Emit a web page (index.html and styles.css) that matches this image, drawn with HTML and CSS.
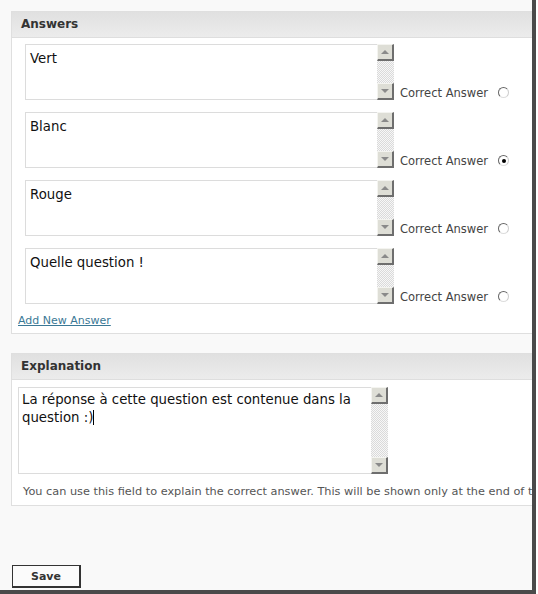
FILE: index.html
```html
<!DOCTYPE html>
<html>
<head>
<meta charset="utf-8">
<link rel="stylesheet" href="styles.css">
</head>
<body>
<div class="frame">
  <div class="panel answers">
    <div class="panel-head">Answers</div>
    <div class="panel-body">
      <div class="row">
        <div class="ta short"><div class="ta-text">Vert</div><div class="sb"><div class="sb-btn up"><span class="arr up"></span></div><div class="sb-track"></div><div class="sb-btn down"><span class="arr down"></span></div></div></div>
        <span class="lbl">Correct Answer</span><span class="radio"></span>
      </div>
      <div class="row">
        <div class="ta short"><div class="ta-text">Blanc</div><div class="sb"><div class="sb-btn up"><span class="arr up"></span></div><div class="sb-track"></div><div class="sb-btn down"><span class="arr down"></span></div></div></div>
        <span class="lbl">Correct Answer</span><span class="radio checked"></span>
      </div>
      <div class="row">
        <div class="ta short"><div class="ta-text">Rouge</div><div class="sb"><div class="sb-btn up"><span class="arr up"></span></div><div class="sb-track"></div><div class="sb-btn down"><span class="arr down"></span></div></div></div>
        <span class="lbl">Correct Answer</span><span class="radio"></span>
      </div>
      <div class="row">
        <div class="ta short"><div class="ta-text">Quelle question !</div><div class="sb"><div class="sb-btn up"><span class="arr up"></span></div><div class="sb-track"></div><div class="sb-btn down"><span class="arr down"></span></div></div></div>
        <span class="lbl">Correct Answer</span><span class="radio"></span>
      </div>
      <a class="add" href="#">Add New Answer</a>
    </div>
  </div>
  <div class="panel explanation">
    <div class="panel-head">Explanation</div>
    <div class="panel-body">
      <div class="ta tall"><div class="ta-text expl">La réponse à cette question est contenue dans la question :)<span class="caret"></span></div><div class="sb"><div class="sb-btn up"><span class="arr up"></span></div><div class="sb-track"></div><div class="sb-btn down"><span class="arr down"></span></div></div></div>
      <p class="help">You can use this field to explain the correct answer. This will be shown only at the end of the quiz.</p>
    </div>
  </div>
  <button class="save">Save</button>
</div>
</body>
</html>
```

FILE: styles.css
```css
html, body {
  margin: 0;
  padding: 0;
  background: #ffffff;
}
body {
  width: 538px;
  height: 594px;
  overflow: hidden;
  font-family: "DejaVu Sans", Verdana, sans-serif;
}
.frame {
  width: 521px;
  height: 579px;
  padding: 11px 0 0 11px;
  background: #f9f9f9;
  border-right: 4px solid #4a4a4a;
  border-bottom: 4px solid #4a4a4a;
  overflow: hidden;
  display: flex;
  flex-direction: column;
  align-items: flex-start;
}
.panel {
  width: 560px;
  flex-shrink: 0;
  background: #ffffff;
  border: 1px solid #dfdfdf;
}
.panel-head {
  height: 25px;
  line-height: 25px;
  padding-left: 9px;
  font-size: 12px;
  font-weight: bold;
  color: #333333;
  background: linear-gradient(#e0e0e0, #ececec);
  border-bottom: 1px solid #dedede;
}
.answers .panel-body {
  padding: 6px 6px 5px 6px;
}
.row {
  display: flex;
  align-items: flex-end;
  margin-left: 7px;
  margin-bottom: 12px;
}
.row:last-of-type {
  margin-bottom: 10px;
}
.ta {
  display: flex;
  box-sizing: border-box;
  background: #fff;
  border: 1px solid #dcdcdc;
  border-right: none;
}
.ta.short {
  width: 369px;
  height: 56px;
}
.ta.tall {
  width: 370px;
  height: 87px;
}
.ta-text {
  flex: 1;
  padding: 5px 4px;
  font-size: 13.3px;
  line-height: 18px;
  color: #111;
}
.ta-text.expl {
  padding: 3px 3px;
}
.caret {
  display: inline-block;
  width: 1px;
  height: 15px;
  background: #000;
  vertical-align: -3px;
}
.sb {
  width: 17px;
  display: flex;
  flex-direction: column;
  margin-top: -1px;
  margin-bottom: -1px;
}
.sb-track {
  flex: 1;
  background: repeating-conic-gradient(#dadada 0 25%, #f7f7f7 0 50%) 0 0 / 2px 2px;
}
.sb-btn {
  height: 17px;
  box-sizing: border-box;
  background: #deded6;
  border-top: 1px solid #f4f4f0;
  border-left: 1px solid #f4f4f0;
  border-right: 2px solid #6e6e6e;
  border-bottom: 2px solid #6e6e6e;
  display: flex;
  align-items: center;
  justify-content: center;
}
.arr {
  width: 0;
  height: 0;
  border-left: 4px solid transparent;
  border-right: 4px solid transparent;
}
.arr.up {
  border-bottom: 4px solid #8a8a8a;
}
.arr.down {
  border-top: 4px solid #8a8a8a;
}
.lbl {
  margin-left: 6px;
  margin-bottom: 0;
  font-size: 11.5px;
  color: #444;
  line-height: 14px;
}
.radio {
  width: 9px;
  height: 9px;
  margin-left: 10px;
  margin-bottom: 2px;
  border: 1px solid #666;
  border-right-color: #ccc;
  border-bottom-color: #ddd;
  border-radius: 50%;
  background: #fff;
  box-sizing: content-box;
  display: flex;
  align-items: center;
  justify-content: center;
}
.radio.checked::after {
  content: "";
  width: 4px;
  height: 4px;
  border-radius: 50%;
  background: #000;
}
.add {
  display: block;
  width: fit-content;
  font-size: 11px;
  color: #3a7895;
  line-height: 14px;
}
.explanation {
  margin-top: 19px;
}
.explanation .panel-body {
  padding: 7px 6px 6px 6px;
}
.help {
  margin: 11px 0 0 5px;
  padding-bottom: 1px;
  font-size: 11.3px;
  line-height: 13px;
  color: #555;
  white-space: nowrap;
}
.save {
  margin-top: 59px;
  margin-left: 1px;
  width: 69px;
  height: 23px;
  flex-shrink: 0;
  background: #fbfbfb;
  border: 2px solid #333;
  border-top-width: 1px;
  border-left-width: 1px;
  font-family: "DejaVu Sans", Verdana, sans-serif;
  font-size: 11px;
  font-weight: bold;
  color: #333;
  padding: 0;
}
```
